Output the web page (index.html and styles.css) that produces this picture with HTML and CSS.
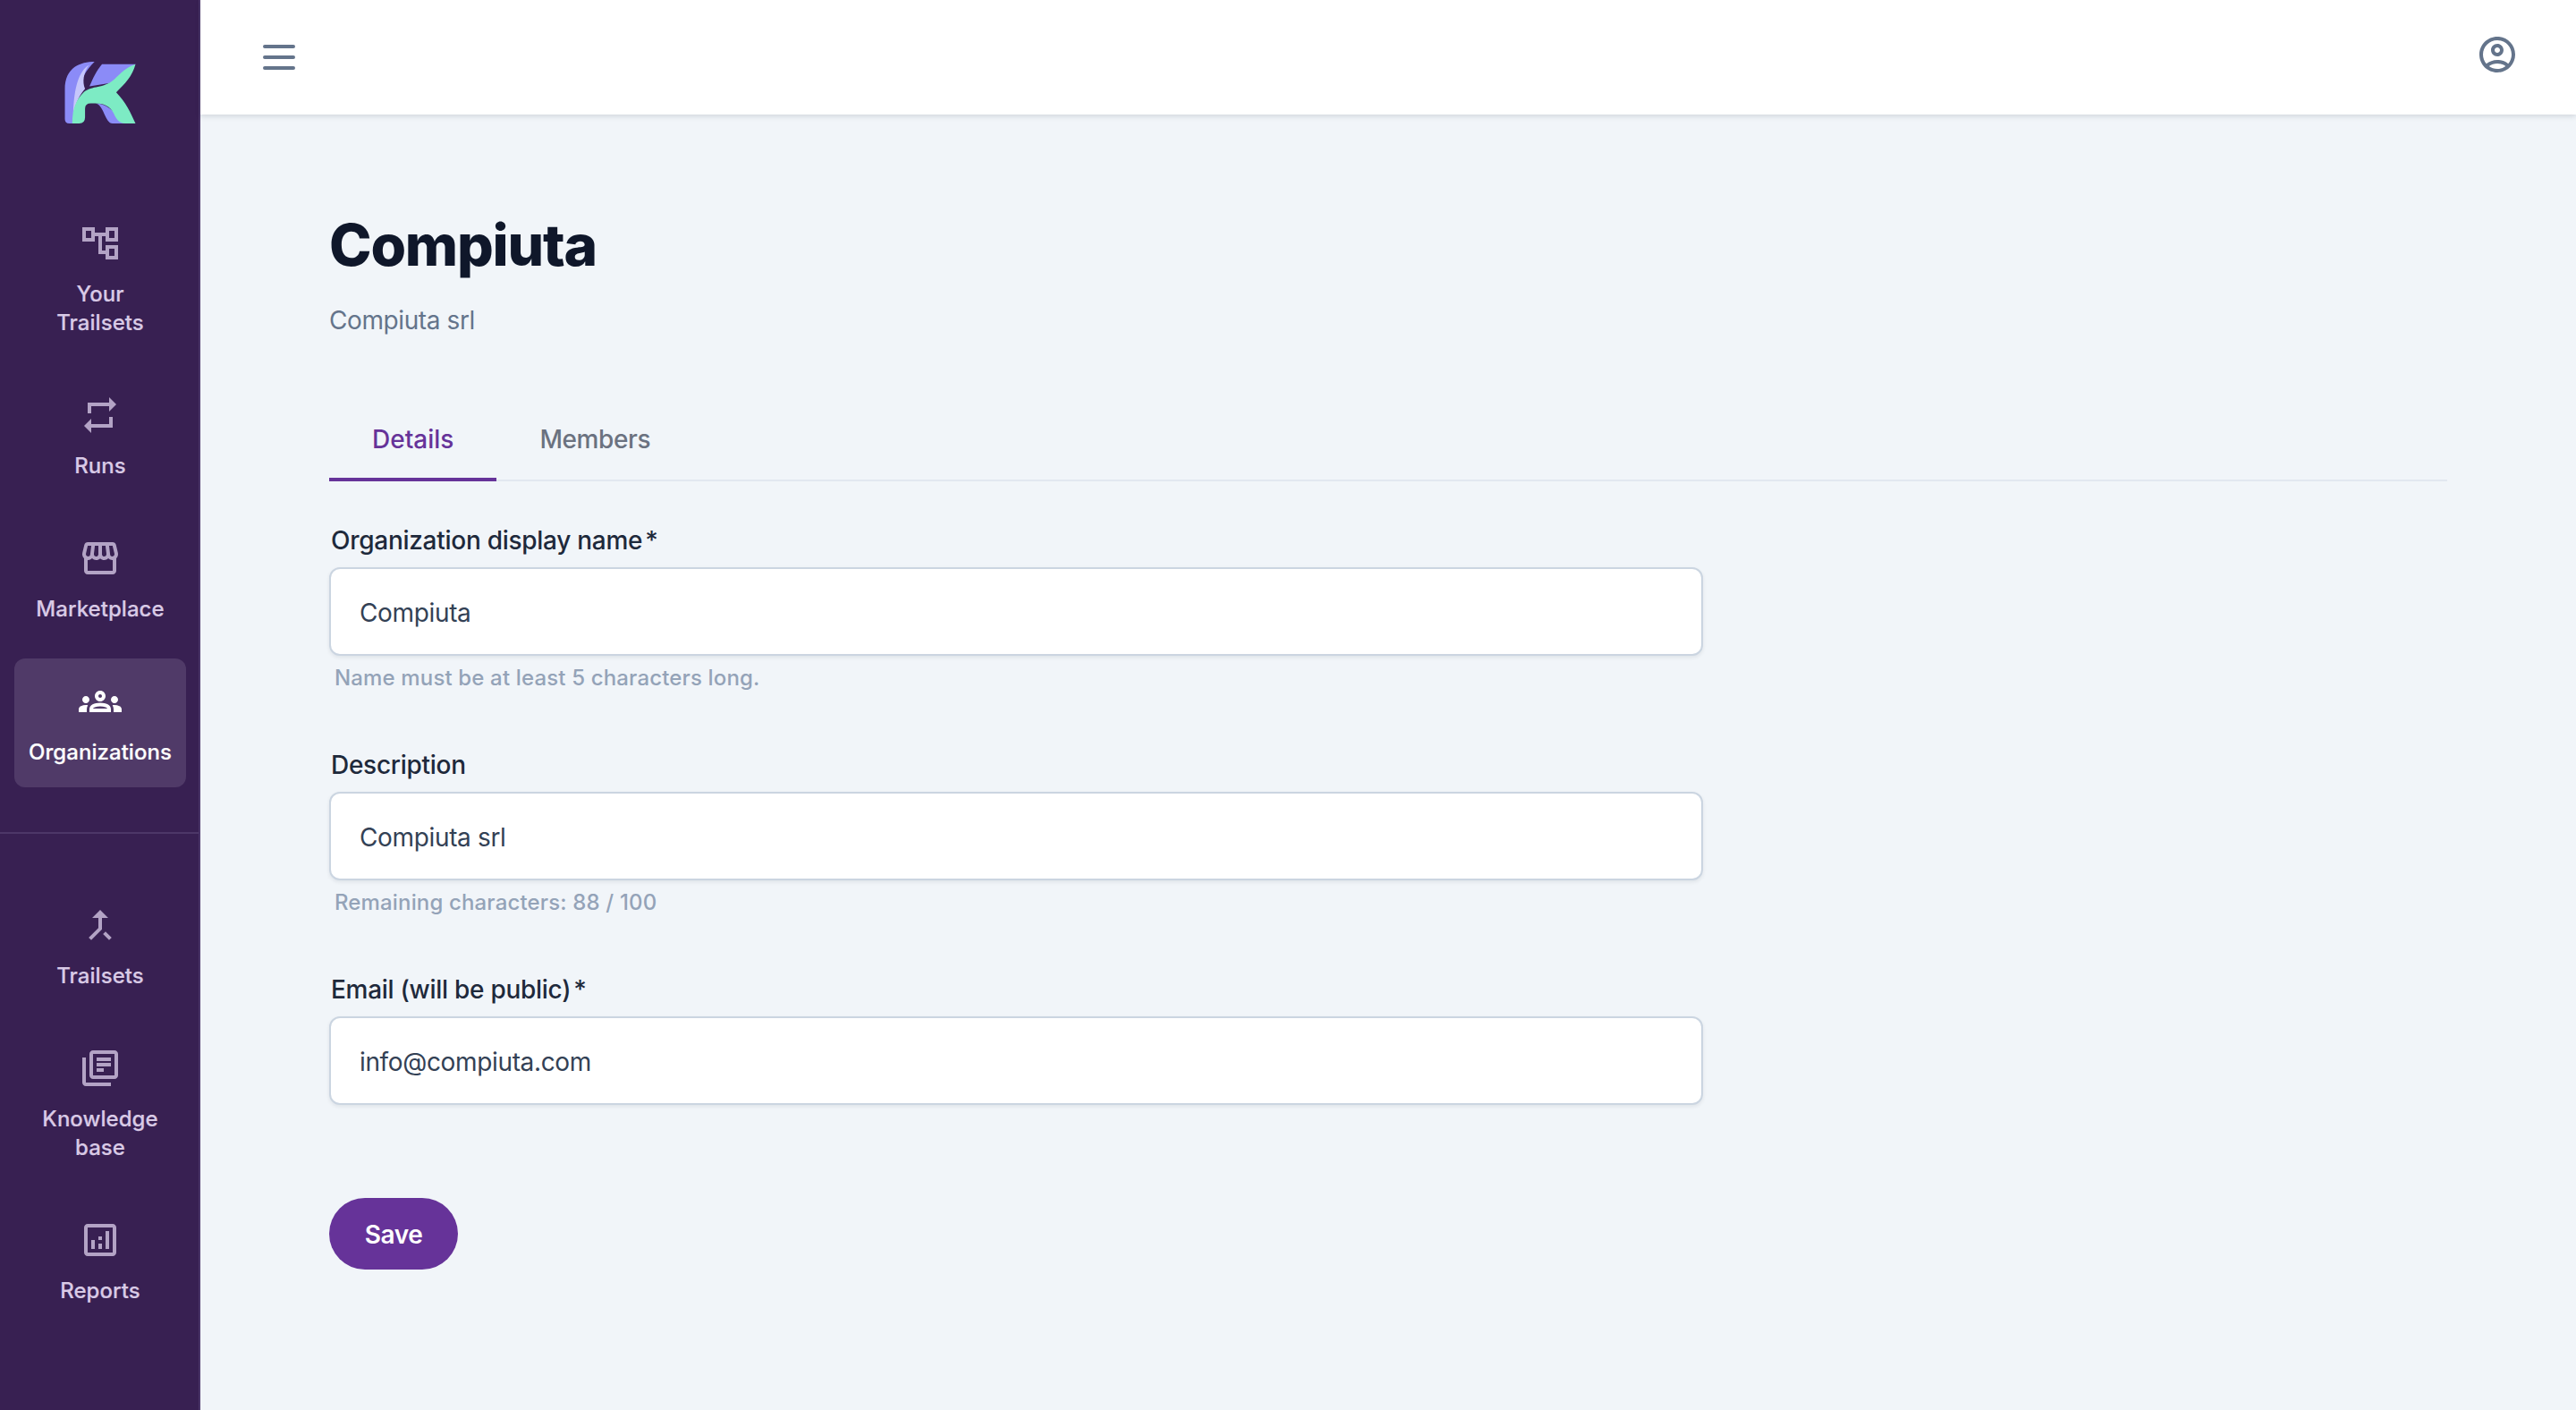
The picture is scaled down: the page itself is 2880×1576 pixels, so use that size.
FILE: index.html
```html
<!DOCTYPE html>
<html lang="en">
<head>
<meta charset="utf-8">
<title>Compiuta</title>
<link rel="stylesheet" href="styles.css">
</head>
<body>
<div class="app">
  <aside class="sidebar">
    <div class="logo">
      <svg class="logo-mark" viewBox="96 57 240 208" aria-label="Logo">
        <path fill="#8b8bf7" d="M197 57C150 57 97 75 97 150V250Q97 265 112 265H128C125 200 140 110 197 57Z"/>
        <path fill="#c6c6fb" d="M178 68C145 88 128 140 125 232C135 190 150 165 165 148C155 125 160 92 178 68Z"/>
        <path fill="#8b8bf7" d="M222 65H335L300 120 180 140C190 115 205 85 222 65Z"/>
        <path fill="#8b8bf7" d="M200 197C228 200 232 265 258 265H305C270 250 260 200 200 197Z"/>
        <path fill="#7debc4" d="M335 65C325 105 300 130 270 160C300 190 320 230 335 265H300C280 265 270 250 262 232C250 205 225 197 200 197H185Q165 197 165 215V245Q165 265 145 265H122C122 215 135 185 160 160C190 135 225 150 265 115C285 95 305 75 335 65Z"/>
      </svg>
    </div>
    <nav class="nav nav-main">
      <a class="nav-item">
        <svg class="nav-icon" viewBox="0 0 24 24"><path d="M22 11V3h-7v3H9V3H2v8h7V8h2v10h4v3h7v-8h-7v3h-2V8h2v3h7zM7 9H4V5h3v4zm10 6h3v4h-3v-4zm0-10h3v4h-3V5z"/></svg>
        <span class="nav-label">Your<br>Trailsets</span>
      </a>
      <a class="nav-item">
        <svg class="nav-icon" viewBox="0 0 24 24"><path d="M7 7h10v3l4-4-4-4v3H5v6h2V7zm10 10H7v-3l-4 4 4 4v-3h12v-6h-2v4z"/></svg>
        <span class="nav-label">Runs</span>
      </a>
      <a class="nav-item">
        <svg class="nav-icon" viewBox="0 0 24 24"><path d="M21.9 8.89l-1.05-4.37c-.22-.9-1-1.52-1.91-1.52H5.05c-.9 0-1.69.63-1.9 1.52L2.1 8.89c-.24 1.02-.02 2.06.62 2.88.08.11.19.19.28.29V19c0 1.1.9 2 2 2h14c1.1 0 2-.9 2-2v-6.94c.09-.09.2-.18.28-.28.64-.82.87-1.87.62-2.89zm-2.99-3.9l1.05 4.37c.1.42.01.84-.25 1.17-.14.18-.44.47-.94.47-.61 0-1.14-.49-1.21-1.14L16.98 5l1.93-.01zM13 5h1.96l.54 4.52c.05.39-.07.78-.33 1.07-.22.26-.54.41-.95.41-.67 0-1.22-.59-1.22-1.31V5zM8.49 9.52L9.04 5H11v4.69c0 .72-.55 1.31-1.29 1.31-.34 0-.65-.15-.89-.41-.25-.29-.37-.68-.33-1.07zm-4.45-.16L5.05 5h1.97l-.58 4.86c-.08.65-.6 1.14-1.21 1.14-.49 0-.8-.29-.93-.47-.27-.32-.36-.75-.26-1.17zM5 19v-6.03c.08.01.15.03.23.03.87 0 1.66-.36 2.24-.95.6.6 1.4.95 2.31.95.87 0 1.65-.36 2.23-.93.59.57 1.39.93 2.29.93.84 0 1.64-.35 2.24-.95.58.59 1.37.95 2.24.95.08 0 .15-.02.23-.03V19H5z"/></svg>
        <span class="nav-label">Marketplace</span>
      </a>
      <a class="nav-item is-active">
        <svg class="nav-icon" viewBox="0 0 24 24"><path d="M4 13c1.1 0 2-.9 2-2s-.9-2-2-2-2 .9-2 2 .9 2 2 2zm1.13 1.1c-.37-.06-.74-.1-1.13-.1-.99 0-1.93.21-2.78.58C.48 14.9 0 15.62 0 16.43V18h4.5v-1.61c0-.83.23-1.61.63-2.29zM20 13c1.1 0 2-.9 2-2s-.9-2-2-2-2 .9-2 2 .9 2 2 2zm4 3.43c0-.81-.48-1.53-1.22-1.85-.85-.37-1.79-.58-2.78-.58-.39 0-.76.04-1.13.1.4.68.63 1.46.63 2.29V18H24v-1.57zm-7.76-2.78c-1.17-.52-2.61-.9-4.24-.9-1.63 0-3.07.39-4.24.9C6.68 14.13 6 15.21 6 16.39V18h12v-1.61c0-1.18-.68-2.26-1.76-2.74zM8.07 16c.09-.23.13-.39.91-.69.97-.38 1.99-.56 3.02-.56s2.05.18 3.02.56c.77.3.81.46.91.69H8.07zM12 8c.55 0 1 .45 1 1s-.45 1-1 1-1-.45-1-1 .45-1 1-1m0-2c-1.66 0-3 1.34-3 3s1.34 3 3 3 3-1.34 3-3-1.34-3-3-3z"/></svg>
        <span class="nav-label">Organizations</span>
      </a>
    </nav>
    <div class="nav-divider"></div>
    <nav class="nav">
      <a class="nav-item">
        <svg class="nav-icon" viewBox="0 0 24 24"><path d="M17 20.41L18.41 19 15 15.59 13.59 17 17 20.41zM7.5 8H11v5.59L5.59 19 7 20.41l6-6V8h3.5L12 3.5 7.5 8z"/></svg>
        <span class="nav-label">Trailsets</span>
      </a>
      <a class="nav-item">
        <svg class="nav-icon" viewBox="0 0 24 24"><path d="M4 6H2v14c0 1.1.9 2 2 2h14v-2H4V6zm16-4H8c-1.1 0-2 .9-2 2v12c0 1.1.9 2 2 2h12c1.1 0 2-.9 2-2V4c0-1.1-.9-2-2-2zm0 14H8V4h12v12zM10 9h8v2h-8zm0 3h4v2h-4zm0-6h8v2h-8z"/></svg>
        <span class="nav-label">Knowledge<br>base</span>
      </a>
      <a class="nav-item">
        <svg class="nav-icon" viewBox="0 0 24 24"><path d="M19 3H5c-1.1 0-2 .9-2 2v14c0 1.1.9 2 2 2h14c1.1 0 2-.9 2-2V5c0-1.1-.9-2-2-2zm0 16H5V5h14v14zM7 12h2v5H7zm8-5h2v10h-2zm-4 7h2v3h-2zm0-4h2v2h-2z"/></svg>
        <span class="nav-label">Reports</span>
      </a>
    </nav>
  </aside>
  <div class="main">
    <header class="topbar">
      <button class="icon-btn" type="button" aria-label="Menu">
        <svg class="menu-icon" viewBox="0 0 48 48"><path d="M8 12h32M8 24h32M8 36h32"/></svg>
      </button>
      <button class="icon-btn avatar-btn" type="button" aria-label="Account">
        <svg class="avatar-icon" viewBox="0 0 24 24"><path d="M12 2C6.48 2 2 6.48 2 12s4.48 10 10 10 10-4.48 10-10S17.52 2 12 2zM7.35 18.5C8.66 17.56 10.26 17 12 17s3.34.56 4.65 1.5c-1.31.94-2.91 1.5-4.65 1.5s-3.34-.56-4.65-1.5zm10.79-1.38C16.45 15.8 14.32 15 12 15s-4.45.8-6.14 2.12C4.7 15.73 4 13.95 4 12c0-4.42 3.58-8 8-8s8 3.58 8 8c0 1.95-.7 3.73-1.86 5.12zM12 6c-1.93 0-3.5 1.57-3.5 3.5S10.07 13 12 13s3.5-1.57 3.5-3.5S13.93 6 12 6zm0 5c-.83 0-1.5-.67-1.5-1.5S11.17 8 12 8s1.5.67 1.5 1.5S12.83 11 12 11z"/></svg>
      </button>
    </header>
    <main class="content">
      <h1 class="title">Compiuta</h1>
      <p class="subtitle">Compiuta srl</p>
      <div class="tabs">
        <a class="tab is-active">Details</a>
        <a class="tab">Members</a>
      </div>
      <form class="form">
        <div class="field">
          <label class="label" for="name">Organization display name<span class="req">*</span></label>
          <input class="input" id="name" type="text" value="Compiuta">
          <p class="hint">Name must be at least 5 characters long.</p>
        </div>
        <div class="field">
          <label class="label" for="desc">Description</label>
          <input class="input" id="desc" type="text" value="Compiuta srl">
          <p class="hint">Remaining characters: 88 / 100</p>
        </div>
        <div class="field">
          <label class="label" for="email">Email (will be public)<span class="req">*</span></label>
          <input class="input" id="email" type="text" value="info@compiuta.com">
        </div>
        <button class="save" type="button">Save</button>
      </form>
    </main>
  </div>
</div>
</body>
</html>
```
FILE: styles.css
```css
* { box-sizing: border-box; }
html, body { margin: 0; height: 100%; }
body {
  font-family: Inter, "Liberation Sans", sans-serif;
  background: #f1f5f9;
  overflow: hidden;
}
.app { display: flex; height: 1576px; }

.sidebar {
  width: 224px;
  flex: none;
  background: #382052;
  border-right: 2px solid #4a3568;
  display: flex;
  flex-direction: column;
}
.logo { height: 224px; padding: 69px 0 0 72px; flex: none; }
.logo-mark { display: block; width: 80px; height: 69px; }
.nav { display: flex; flex-direction: column; gap: 16px; padding: 0 16px 0 16px; width: 224px; }
.nav-item {
  display: flex;
  flex-direction: column;
  align-items: center;
  gap: 17px;
  padding: 24px 0 23px;
  border-radius: 12px;
  color: #d9cae6;
  fill: #b3a3c5;
}
.nav-item.is-active { background: #503a68; color: #fff; fill: #fff; }
.nav-icon { display: block; width: 48px; height: 48px; fill: inherit; }
.nav-label { font-size: 24px; line-height: 32px; font-weight: 500; letter-spacing: .05px; text-align: center; white-space: nowrap; -webkit-text-stroke: .2px currentColor; }
.nav-divider { height: 2px; background: #4d3768; margin: 50px 0 54px; width: 222px; flex: none; }

.main { flex: 1; min-width: 0; display: flex; flex-direction: column; }
.topbar {
  height: 128px;
  flex: none;
  background: #fff;
  box-shadow: 0 2px 6px rgba(15, 23, 42, .14);
  display: flex;
  align-items: center;
  justify-content: space-between;
  padding: 0 64px;
}
.icon-btn { border: 0; padding: 0; background: none; display: block; width: 48px; height: 48px; }
.avatar-btn { margin-bottom: 6px; }
.menu-icon { display: block; width: 48px; height: 48px; fill: none; stroke: #64748b; stroke-width: 4; stroke-linecap: round; }
.avatar-icon { display: block; width: 48px; height: 48px; fill: #64748b; }

.content { padding: 102px 144px 0; }
.title { margin: 0; font-size: 64px; line-height: 88px; font-weight: 800; letter-spacing: -1.2px; color: #0f172a; }
.subtitle { margin: 20px 0 0; font-size: 28px; line-height: 40px; letter-spacing: -.4px; color: #64748b; }
.tabs { display: flex; margin-top: 69px; border-bottom: 2px solid #e2e8f0; height: 91px; }
.tab {
  padding: 24px 48px 0;
  height: 91px;
  font-size: 28px;
  line-height: 40px;
  font-weight: 500;
  letter-spacing: -.4px;
  color: #6b7280;
}
.tab.is-active { color: #663399; border-bottom: 4px solid #663399; letter-spacing: 0; }

.form { width: 1536px; margin-top: 46px; display: flex; flex-direction: column; }
.field { height: 251px; }
.field:last-of-type { height: 148px; }
.label { display: block; padding-left: 2px; margin-bottom: 10px; font-size: 28px; line-height: 40px; font-weight: 500; letter-spacing: -.28px; color: #1e293b; }
.req { margin-left: 3px; }
.input {
  display: block;
  width: 100%;
  height: 99px;
  padding: 3px 32px 0;
  background: #fff;
  border: 2px solid #cbd5e1;
  border-radius: 12px;
  box-shadow: 0 2px 4px rgba(15, 23, 42, .08);
  font-family: inherit;
  font-size: 28px;
  letter-spacing: -.35px;
  color: #334155;
  outline: none;
}
.hint { margin: 9px 0 0; padding-left: 6px; font-size: 24px; line-height: 32px; font-weight: 500; letter-spacing: .15px; color: #94a3b8; }
.save {
  align-self: flex-start;
  width: 144px;
  height: 80px;
  margin-top: 105px;
  padding: 2px 0 0;
  border: 0;
  border-radius: 40px;
  background: #663399;
  color: #fff;
  font-family: inherit;
  font-size: 28px;
  font-weight: 600;
  letter-spacing: -.4px;
}
```
